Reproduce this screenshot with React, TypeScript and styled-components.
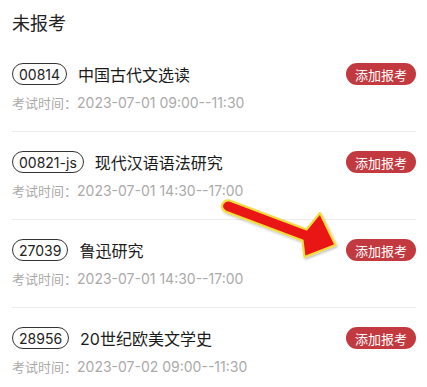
import React from "react";
import styled, { createGlobalStyle } from "styled-components";

const Global = createGlobalStyle`
  html, body { margin: 0; padding: 0; background: #fff; }
  body { font-family: Inter, "Noto Sans CJK SC", sans-serif; -webkit-font-smoothing: antialiased; }
`;

const Page = styled.div`
  position: relative;
  width: 427px;
  height: 387px;
  overflow: hidden;
  background: #fff;
  padding: 0 11px 0 12px;
  box-sizing: border-box;
`;

const Title = styled.div`
  height: 44px;
  display: flex;
  align-items: center;
  font-size: 18px;
  color: #222;
  font-family: "Noto Sans CJK SC", sans-serif;
  padding-bottom: 1px;
  box-sizing: border-box;
`;

const List = styled.div`
  display: flex;
  flex-direction: column;
`;

const Item = styled.div<{ $last?: boolean }>`
  padding: 19px 0 19px;
  border-bottom: ${(p) => (p.$last ? "none" : "1px solid #ececec")};
  display: flex;
  flex-direction: column;
  gap: 9px;
`;

const Head = styled.div`
  display: flex;
  align-items: center;
  height: 22px;
`;

const Code = styled.span`
  height: 22px;
  box-sizing: border-box;
  border: 1.3px solid #333;
  border-radius: 11px;
  padding: 0 6px;
  display: inline-flex;
  align-items: center;
  font-size: 14px;
  color: #222;
  font-family: Inter, "Noto Sans CJK SC", sans-serif;
`;

const Name = styled.span`
  margin-left: 11px;
  font-size: 16px;
  color: #1a1a1a;
  flex: 1;
  font-family: Inter, "Noto Sans CJK SC", sans-serif;
`;

const AddButton = styled.button`
  height: 22px;
  border: none;
  border-radius: 11px;
  background: #c23a3f;
  color: #fff;
  font-size: 13px;
  padding: 0 9px;
  font-family: "Noto Sans CJK SC", sans-serif;
  display: inline-flex;
  align-items: center;
`;

const Time = styled.div`
  font-size: 13px;
  line-height: 18px;
  color: #aaaaaa;
  font-family: "Noto Sans CJK SC", sans-serif;
`;

const TimeValue = styled.span`
  font-family: Inter, "Noto Sans CJK SC", sans-serif;
  font-size: 14px;
`;

const Arrow = styled.svg`
  position: absolute;
  left: 0;
  top: 0;
  pointer-events: none;
`;

const items = [
  { code: "00814", name: "中国古代文选读", time: "2023-07-01 09:00--11:30" },
  { code: "00821-js", name: "现代汉语语法研究", time: "2023-07-01 14:30--17:00" },
  { code: "27039", name: "鲁迅研究", time: "2023-07-01 14:30--17:00" },
  { code: "28956", name: "20世纪欧美文学史", time: "2023-07-02 09:00--11:30" },
];

export default function App() {
  return (
    <>
      <Global />
      <Page>
        <Title>未报考</Title>
        <List>
          {items.map((it, i) => (
            <Item key={it.code} $last={i === items.length - 1}>
              <Head>
                <Code>{it.code}</Code>
                <Name>{it.name}</Name>
                <AddButton>添加报考</AddButton>
              </Head>
              <Time>
                考试时间：<TimeValue>{it.time}</TimeValue>
              </Time>
            </Item>
          ))}
        </List>
        <Arrow width="427" height="387" viewBox="0 0 427 387">
          <defs>
            <filter id="sh" x="-20%" y="-20%" width="140%" height="140%">
              <feDropShadow dx="1" dy="1.5" stdDeviation="1.2" floodColor="#000" floodOpacity="0.25" />
            </filter>
          </defs>
          <path
            d="M229.5 200.5 L306.5 229.5 L320 213 L335.5 245 L304.5 257 L302.5 240.5 L225.5 211.5 Q220.5 208 222.5 204 Q225 199.5 229.5 200.5 Z"
            fill="#ea1219"
            stroke="#f3dc3c"
            strokeWidth="2.2"
            strokeLinejoin="round"
            filter="url(#sh)"
          />
        </Arrow>
      </Page>
    </>
  );
}
